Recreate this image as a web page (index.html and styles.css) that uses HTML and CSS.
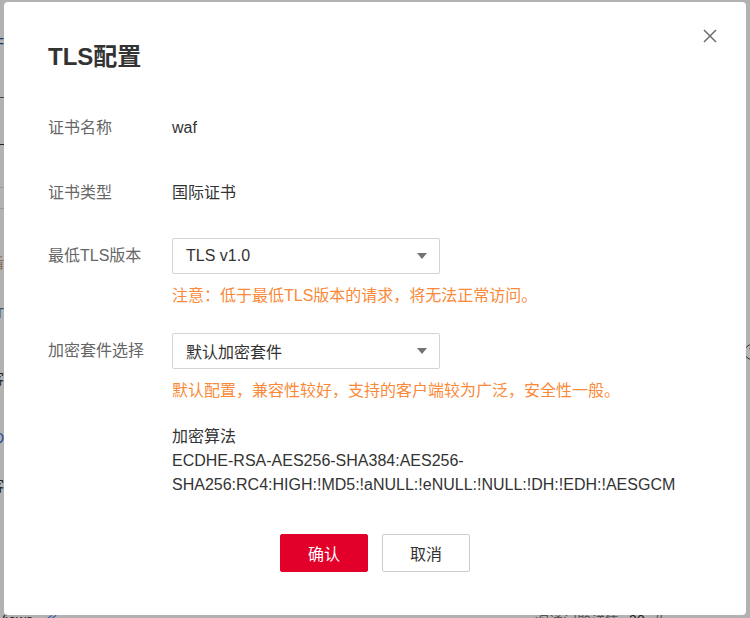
FILE: index.html
```html
<!DOCTYPE html>
<html lang="zh-CN">
<head>
    <meta charset="UTF-8">
    <meta name="viewport" content="width=device-width, initial-scale=1.0">
    <title>TLS配置</title>
    <link rel="stylesheet" href="styles.css">
</head>
<body>
    <div class="page">
        <div class="page-side">
            <div class="side-text side-logo">WAF</div>
            <div class="side-rule side-dashed"></div>
            <div class="side-rule side-dark"></div>
            <div class="side-rule side-light r1"></div>
            <div class="side-rule side-light r2"></div>
            <div class="side-text side-tag">盾</div>
            <div class="side-text side-it">IT</div>
            <div class="side-text side-v1">访客</div>
            <div class="side-text side-link">ID</div>
            <div class="side-text side-v2">访客</div>
        </div>
        <span class="page-help">?</span>
        <div class="page-foot">
            <span class="foot-text">Views</span>
            <span class="foot-link">≪</span>
            <span class="foot-gap"></span>
            <span class="foot-muted">沟通问题详情</span>
            <span class="foot-text">30</span>
            <span class="foot-muted">//</span>
        </div>
    </div>

    <div class="mask"></div>

    <div class="dialog">
        <button class="dialog-close" aria-label="关闭">
            <svg width="14" height="14" viewBox="0 0 14 14">
                <path d="M1 1 L13 13 M13 1 L1 13" stroke="#707070" stroke-width="1.6" fill="none"/>
            </svg>
        </button>

        <h2 class="dialog-title">TLS配置</h2>

        <div class="form">
            <div class="form-item">
                <div class="form-label">证书名称</div>
                <div class="form-value">waf</div>
            </div>
            <div class="form-item">
                <div class="form-label">证书类型</div>
                <div class="form-value">国际证书</div>
            </div>
            <div class="form-item">
                <div class="form-label">最低TLS版本</div>
                <div class="form-control">
                    <div class="select">
                        <span>TLS v1.0</span>
                        <span class="select-arrow"></span>
                    </div>
                    <p class="tip">注意：低于最低TLS版本的请求，将无法正常访问。</p>
                </div>
            </div>
            <div class="form-item">
                <div class="form-label">加密套件选择</div>
                <div class="form-control">
                    <div class="select">
                        <span>默认加密套件</span>
                        <span class="select-arrow"></span>
                    </div>
                    <p class="tip">默认配置，兼容性较好，支持的客户端较为广泛，安全性一般。</p>
                    <div class="cipher">
                        <div>加密算法</div>
                        <div class="cipher-list">ECDHE-RSA-AES256-SHA384:AES256-SHA256:RC4:HIGH:!MD5:!aNULL:!eNULL:!NULL:!DH:!EDH:!AESGCM</div>
                    </div>
                </div>
            </div>
        </div>

        <div class="dialog-footer">
            <button class="btn btn-primary">确认</button>
            <button class="btn">取消</button>
        </div>
    </div>
</body>
</html>
```

FILE: styles.css
```css
* {
    box-sizing: border-box;
}
body {
    margin: 0;
    font-family: "Liberation Sans", "Noto Sans CJK SC", sans-serif;
    font-size: 16px;
    color: #333;
    background-color: #fff;
    width: 750px;
    height: 618px;
    overflow: hidden;
}

/* page behind the mask, only its edges show */
.page {
    position: relative;
    height: 618px;
    display: flex;
    flex-direction: column;
}
.page-side {
    display: flex;
    flex-direction: column;
    align-items: flex-start;
    font-size: 14px;
}
.side-text {
    width: 40px;
    margin-left: -36px;
    line-height: 16px;
    text-align: right;
    white-space: nowrap;
    color: #333;
}
.side-rule {
    width: 4px;
    height: 1px;
    background-color: #333;
}
.side-logo {
    margin-top: 35px;
    color: #2a4f8f;
}
.side-dashed {
    margin-top: 46px;
    background-color: #666;
}
.side-dark {
    margin-top: 46px;
}
.side-light {
    background-color: #ddd;
}
.r1 {
    margin-top: 42px;
}
.r2 {
    margin-top: 20px;
}
.side-tag {
    margin-top: 46px;
    color: #c49a6c;
}
.side-it {
    margin-top: 34px;
    color: #5a7fa8;
}
.side-v1 {
    margin-top: 50px;
}
.side-link {
    margin-top: 43px;
    color: #2b5fd9;
}
.side-v2 {
    margin-top: 32px;
}
.page-help {
    position: absolute;
    left: 744px;
    top: 344px;
    width: 16px;
    height: 16px;
    border: 1.5px solid #444;
    border-radius: 50%;
    font-size: 11px;
    line-height: 13px;
    text-align: center;
    color: #444;
}
.page-foot {
    margin-top: auto;
    height: 6px;
    margin-left: -4px;
    display: flex;
    gap: 10px;
    font-size: 14px;
    line-height: 16px;
    white-space: nowrap;
}
.foot-link {
    color: #2b6fd9;
}
.foot-gap {
    width: 458px;
}
.foot-muted {
    color: #777;
}

.mask {
    position: fixed;
    inset: 0;
    background-color: rgba(0, 0, 0, 0.3);
}

/* dialog */
.dialog {
    position: absolute;
    left: 4px;
    top: 2px;
    width: 742px;
    height: 613px;
    background-color: #fff;
    border-radius: 4px;
    padding: 40px 44px 0;
}
.dialog-close {
    position: absolute;
    top: 27px;
    right: 29px;
    width: 14px;
    height: 14px;
    padding: 0;
    border: none;
    background: none;
    cursor: pointer;
}
.dialog-close svg {
    display: block;
}
.dialog-title {
    margin: 0;
    font-size: 24px;
    line-height: 30px;
    font-weight: bold;
    color: #333;
}

.form {
    margin-top: 38px;
    display: flex;
    flex-direction: column;
    gap: 27px;
}
.form-item {
    display: grid;
    grid-template-columns: 124px 1fr;
}
.form-item:nth-child(2) {
    margin-top: 2px;
}
.form-label {
    line-height: 36px;
    color: #666;
}
.form-value {
    line-height: 36px;
    color: #333;
}
.select {
    width: 268px;
    height: 36px;
    border: 1px solid #d4d4d4;
    border-radius: 2px;
    padding: 0 12px 0 13px;
    display: flex;
    align-items: center;
    justify-content: space-between;
    color: #333;
}
.select-arrow {
    width: 0;
    height: 0;
    border-left: 5px solid transparent;
    border-right: 5px solid transparent;
    border-top: 6px solid #737373;
}
.tip {
    margin: 10px 0 0;
    line-height: 24px;
    color: #fa8a3a;
}
.form-item:nth-child(3) .tip {
    margin-bottom: -2px;
}
.cipher {
    margin-top: 22px;
    line-height: 24px;
    color: #333;
    width: 526px;
}

.dialog-footer {
    margin-top: 37px;
    display: flex;
    justify-content: center;
    gap: 14px;
}
.btn {
    width: 88px;
    height: 38px;
    border: 1px solid #ccc;
    border-radius: 2px;
    background-color: #fff;
    color: #333;
    font-family: inherit;
    font-size: 16px;
    cursor: pointer;
}
.btn-primary {
    border-color: #e2002b;
    background-color: #e2002b;
    color: #fff;
}
```
